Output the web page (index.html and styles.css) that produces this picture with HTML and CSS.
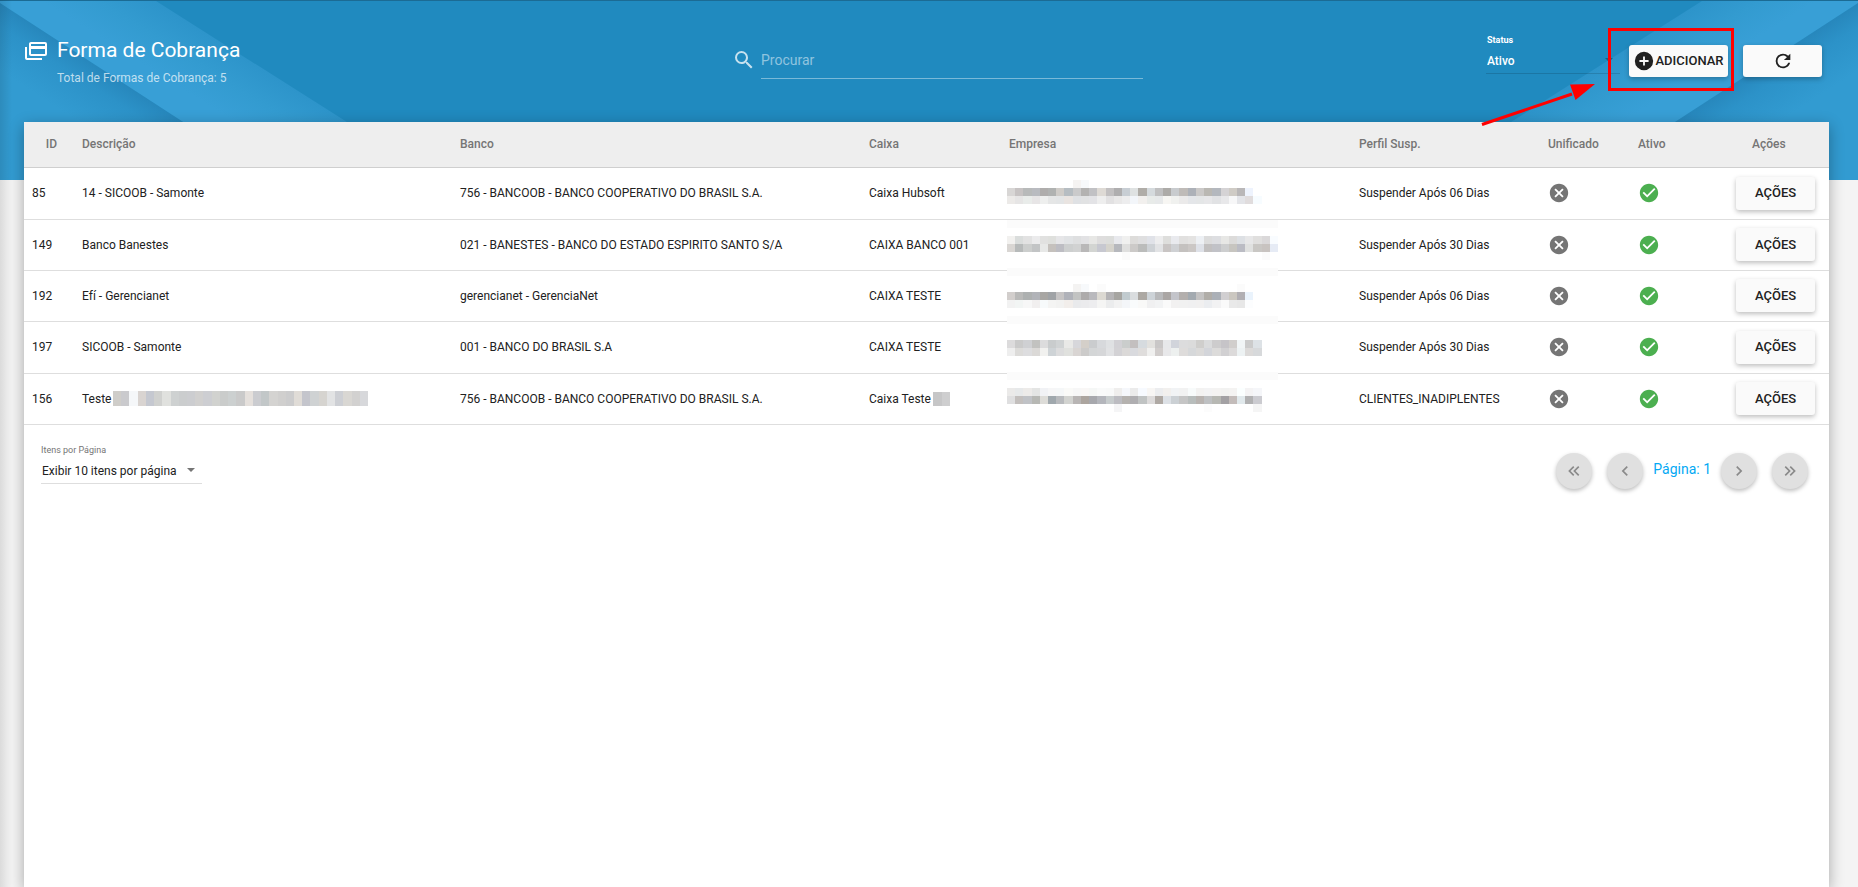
FILE: index.html
```html
<!DOCTYPE html>
<html lang="pt-BR">
<head>
<meta charset="utf-8">
<title>Forma de Cobrança</title>
<link rel="stylesheet" href="styles.css">
</head>
<body>
<svg class="symbols" aria-hidden="true">
  <symbol id="i-close" viewBox="0 0 24 24"><path d="M12,2C17.53,2 22,6.47 22,12C22,17.53 17.53,22 12,22C6.47,22 2,17.53 2,12C2,6.47 6.47,2 12,2M15.59,7L12,10.59L8.41,7L7,8.41L10.59,12L7,15.59L8.41,17L12,13.41L15.59,17L17,15.59L13.41,12L17,8.41L15.59,7Z"/></symbol>
  <symbol id="i-check" viewBox="0 0 24 24"><path d="M12 2C6.5 2 2 6.5 2 12S6.5 22 12 22 22 17.5 22 12 17.5 2 12 2M10 17L5 12L6.41 10.59L10 14.17L17.59 6.58L19 8L10 17Z"/></symbol>
  <symbol id="i-left" viewBox="0 0 24 24"><path d="M15.41,16.58L10.83,12L15.41,7.41L14,6L8,12L14,18L15.41,16.58Z"/></symbol>
  <symbol id="i-right" viewBox="0 0 24 24"><path d="M8.59,16.58L13.17,12L8.59,7.41L10,6L16,12L10,18L8.59,16.58Z"/></symbol>
  <symbol id="i-first" viewBox="0 0 24 24"><path d="M18.41,7.41L17,6L11,12L17,18L18.41,16.59L13.83,12L18.41,7.41M12.41,7.41L11,6L5,12L11,18L12.41,16.59L7.83,12L12.41,7.41Z"/></symbol>
  <symbol id="i-last" viewBox="0 0 24 24"><path d="M5.59,7.41L7,6L13,12L7,18L5.59,16.59L10.17,12L5.59,7.41M11.59,7.41L13,6L19,12L13,18L11.59,16.59L16.17,12L11.59,7.41Z"/></symbol>
  <symbol id="rays" viewBox="0 0 360 180">
    <path fill="url(#corner)" d="M0 2L274 180H0Z"/>
    <path fill="url(#band)" d="M0 0H156L440 180H274L0 2Z"/>
  </symbol>
  <linearGradient id="corner" gradientUnits="userSpaceOnUse" x1="93" y1="62" x2="62" y2="110">
    <stop offset="0" stop-color="#2787bc"/><stop offset=".35" stop-color="#2c92c8"/><stop offset="1" stop-color="#329bd1"/>
  </linearGradient>
  <linearGradient id="band" gradientUnits="userSpaceOnUse" x1="251" y1="60" x2="219" y2="111">
    <stop offset="0" stop-color="#2d94ca"/><stop offset=".5" stop-color="#339bd0"/><stop offset="1" stop-color="#389fd6"/>
  </linearGradient>
</svg>

<div class="page">
  <div class="backdrop" aria-hidden="true">
    <svg class="rays"><use href="#rays"/></svg>
    <svg class="rays rays-right"><use href="#rays"/></svg>
  </div>

  <header class="toolbar">
    <div class="heading">
      <svg class="heading-icon" viewBox="0 0 24 24" aria-hidden="true"><path d="M21,8V6H7V8H21M21,16V11H7V16H21M21,4A2,2 0 0,1 23,6V16A2,2 0 0,1 21,18H7C5.89,18 5,17.1 5,16V6C5,4.89 5.89,4 7,4H21M3,20H18V22H3A2,2 0 0,1 1,20V9H3V20Z"/></svg>
      <div>
        <h1 class="title">Forma de Cobrança</h1>
        <p class="subtitle">Total de Formas de Cobrança: 5</p>
      </div>
    </div>
    <div class="search">
      <svg class="search-icon" viewBox="0 0 24 24" aria-hidden="true"><path d="M9.5,3A6.5,6.5 0 0,1 16,9.5C16,11.11 15.41,12.59 14.44,13.73L14.71,14H15.5L20.5,19L19,20.5L14,15.5V14.71L13.73,14.44C12.59,15.41 11.11,16 9.5,16A6.5,6.5 0 0,1 3,9.5A6.5,6.5 0 0,1 9.5,3M9.5,5C7,5 5,7 5,9.5C5,12 7,14 9.5,14C12,14 14,12 14,9.5C14,7 12,5 9.5,5Z"/></svg>
      <input class="search-input" type="text" placeholder="Procurar" aria-label="Procurar">
    </div>
    <div class="actions">
      <div class="status">
        <label class="status-label" for="status">Status</label>
        <div class="select-wrap">
          <select class="select status-select" id="status"><option>Ativo</option></select>
        </div>
      </div>
      <button class="btn btn-add" type="button">
        <svg class="add-icon" viewBox="0 0 24 24" aria-hidden="true"><path d="M17,13H13V17H11V13H7V11H11V7H13V11H17M12,2A10,10 0 0,0 2,12A10,10 0 0,0 12,22A10,10 0 0,0 22,12A10,10 0 0,0 12,2Z"/></svg>ADICIONAR
      </button>
      <button class="btn btn-refresh" type="button" aria-label="Atualizar">
        <svg class="refresh-icon" viewBox="0 0 24 24" aria-hidden="true"><path d="M17.65,6.35C16.2,4.9 14.21,4 12,4A8,8 0 0,0 4,12A8,8 0 0,0 12,20C15.73,20 18.84,17.45 19.73,14H17.65C16.83,16.33 14.61,18 12,18A6,6 0 0,1 6,12A6,6 0 0,1 12,6C13.66,6 15.14,6.69 16.22,7.78L13,11H20V4L17.65,6.35Z"/></svg>
      </button>
      <svg class="callout" viewBox="0 0 255 102" aria-hidden="true">
        <rect x="129.500" y="3.500" width="123" height="60" fill="none" stroke="#f00" stroke-width="3"/>
        <path d="M2 98.500L92 68" stroke="#f00" stroke-width="3"/>
        <path d="M115 58L90 58.500L95.500 74Z" fill="#f00"/>
      </svg>
    </div>
  </header>

  <main class="card">
    <table class="grid">
      <colgroup>
        <col class="c-id"><col class="c-desc"><col class="c-bank"><col class="c-cash"><col class="c-company"><col class="c-profile"><col class="c-unified"><col class="c-active"><col class="c-actions">
      </colgroup>
      <thead>
        <tr><th class="th-id">ID</th><th>Descrição</th><th>Banco</th><th>Caixa</th><th>Empresa</th><th>Perfil Susp.</th><th>Unificado</th><th>Ativo</th><th class="th-actions">Ações</th></tr>
      </thead>
      <tbody>
        <tr><td>85</td><td>14 - SICOOB - Samonte</td><td>756 - BANCOOB - BANCO COOPERATIVO DO BRASIL S.A.</td><td>Caixa Hubsoft</td><td class="company"><svg class="mosaic" id="mosaic" viewBox="0 0 33 29" preserveAspectRatio="none" shape-rendering="crispEdges" aria-hidden="true"></svg></td><td>Suspender Após 06 Dias</td><td><svg class="mark no"><use href="#i-close"/></svg></td><td><svg class="mark yes"><use href="#i-check"/></svg></td><td><button class="btn btn-row" type="button">AÇÕES</button></td></tr>
        <tr><td>149</td><td>Banco Banestes</td><td>021 - BANESTES - BANCO DO ESTADO ESPIRITO SANTO S/A</td><td>CAIXA BANCO 001</td><td></td><td>Suspender Após 30 Dias</td><td><svg class="mark no"><use href="#i-close"/></svg></td><td><svg class="mark yes"><use href="#i-check"/></svg></td><td><button class="btn btn-row" type="button">AÇÕES</button></td></tr>
        <tr><td>192</td><td>Efí - Gerencianet</td><td>gerencianet - GerenciaNet</td><td>CAIXA TESTE</td><td></td><td>Suspender Após 06 Dias</td><td><svg class="mark no"><use href="#i-close"/></svg></td><td><svg class="mark yes"><use href="#i-check"/></svg></td><td><button class="btn btn-row" type="button">AÇÕES</button></td></tr>
        <tr><td>197</td><td>SICOOB - Samonte</td><td>001 - BANCO DO BRASIL S.A</td><td>CAIXA TESTE</td><td></td><td>Suspender Após 30 Dias</td><td><svg class="mark no"><use href="#i-close"/></svg></td><td><svg class="mark yes"><use href="#i-check"/></svg></td><td><button class="btn btn-row" type="button">AÇÕES</button></td></tr>
        <tr><td>156</td><td><div class="masked">Teste <svg class="mask-name" id="mask-name" viewBox="0 0 31 1" preserveAspectRatio="none" shape-rendering="crispEdges" aria-hidden="true"></svg></div></td><td>756 - BANCOOB - BANCO COOPERATIVO DO BRASIL S.A.</td><td><div class="masked">Caixa Teste <svg class="mask-cash" id="mask-cash" viewBox="0 0 2 1" preserveAspectRatio="none" shape-rendering="crispEdges" aria-hidden="true"></svg></div></td><td></td><td>CLIENTES_INADIPLENTES</td><td><svg class="mark no"><use href="#i-close"/></svg></td><td><svg class="mark yes"><use href="#i-check"/></svg></td><td><button class="btn btn-row" type="button">AÇÕES</button></td></tr>
      </tbody>
    </table>

    <div class="footer">
      <div class="per-page">
        <label class="per-page-label" for="per-page">Itens por Página</label>
        <div class="select-wrap">
          <select class="select per-page-select" id="per-page"><option>Exibir 10 itens por página</option></select>
        </div>
      </div>
      <nav class="pager" aria-label="Paginação">
        <button class="round" type="button" aria-label="Primeira"><svg class="chevron"><use href="#i-first"/></svg></button>
        <button class="round" type="button" aria-label="Anterior"><svg class="chevron"><use href="#i-left"/></svg></button>
        <span class="current">Página: 1</span>
        <button class="round" type="button" aria-label="Próxima"><svg class="chevron"><use href="#i-right"/></svg></button>
        <button class="round" type="button" aria-label="Última"><svg class="chevron"><use href="#i-last"/></svg></button>
      </nav>
    </div>
  </main>
</div>
<script src="app.js"></script>
</body>
</html>
```

FILE: styles.css
```css
* { box-sizing: border-box; }

body {
  margin: 0;
  font-family: Roboto, "Liberation Sans", sans-serif;
  font-size: 12px;
  line-height: 16px;
  color: #212121;
  background: #f4f4f4;
}

.symbols { position: absolute; width: 0; height: 0; }

.page {
  position: relative;
  display: flex;
  flex-direction: column;
  min-height: 100vh;
  padding: 0 29px 0 24px;
  overflow: hidden;
  background: linear-gradient(90deg, rgba(0, 0, 0, .1), rgba(0, 0, 0, 0) 12px);
}

.backdrop {
  position: absolute;
  inset: 0 0 auto 0;
  z-index: -1;
  height: 180px;
  overflow: hidden;
  background: #208abf;
  border-top: 1px solid #1b6b94;
}

.rays {
  position: absolute;
  top: 0;
  left: 0;
  width: 360px;
  height: 180px;
}

.rays-right { right: 0; left: auto; transform: scaleX(-1); }

/* Toolbar */
.toolbar {
  display: grid;
  grid-template-columns: minmax(0, 708fr) minmax(0, 411fr) minmax(0, 686fr);
  height: 122px;
}

.heading { display: flex; gap: 9px; padding-top: 38px; color: #fff; }
.heading-icon { width: 24px; height: 24px; fill: #fff; }
.title { margin: 0; font-size: 21px; line-height: 24px; font-weight: 400; }
.subtitle { margin: 8px 0 0; color: rgba(255, 255, 255, .7); }

.search { display: flex; gap: 5px; padding-top: 48px; }
.search-icon { width: 24px; height: 24px; fill: rgba(255, 255, 255, .75); }
.search-input {
  flex: 1;
  min-width: 0;
  height: 31px;
  padding: 0 0 7px;
  border: 0;
  border-bottom: 1px solid rgba(255, 255, 255, .4);
  border-radius: 0;
  outline: 0;
  background: none;
  color: #fff;
  font: 14px/20px Roboto, sans-serif;
}
.search-input::placeholder { color: rgba(255, 255, 255, .5); opacity: 1; }

.actions {
  position: relative;
  display: flex;
  justify-content: flex-end;
  padding: 0 7px 0 0;
}
.status { width: 134px; margin-right: 9px; padding-top: 34px; }
.status-label { display: block; padding-left: 1px; color: #fff; font-size: 9px; line-height: 12px; font-weight: 700; }

.select-wrap { position: relative; }
.select-wrap::after {
  content: "";
  position: absolute;
  top: 12px;
  right: 7px;
  border: 4px solid transparent;
  border-top-color: currentColor;
  border-bottom: 0;
  pointer-events: none;
}
.select {
  appearance: none;
  display: block;
  width: 100%;
  height: 28px;
  padding: 3px 0 0 1px;
  border: 0;
  border-bottom: 1px solid #dedede;
  border-radius: 0;
  outline: 0;
  background: none;
  color: #212121;
  font: 12px/16px Roboto, sans-serif;
}
.status-select { border-color: rgba(0, 0, 0, .14); color: #fff; font-size: 12px; font-weight: 500; }
.status .select-wrap { color: #1b5e82; }
.per-page .select-wrap { color: #757575; }

.btn {
  display: flex;
  align-items: center;
  justify-content: center;
  padding: 0;
  border: 0;
  border-radius: 3px;
  background: #fafafa;
  box-shadow: 0 2px 5px rgba(0, 0, 0, .26);
  color: #212121;
  font: 500 13px/16px Roboto, sans-serif;
}
.btn-add { width: 99px; height: 32px; margin: 45px 15px 0 0; }
.btn-refresh { width: 79px; height: 32px; margin-top: 45px; }
.btn-row { width: 79px; height: 33px; }
.add-icon { width: 22px; height: 22px; fill: #212121; }
.refresh-icon { width: 22px; height: 22px; fill: #212121; }

.callout {
  position: absolute;
  top: 26px;
  right: 94px;
  z-index: 2;
  width: 255px;
  height: 102px;
  pointer-events: none;
}

/* Card and table */
.card {
  flex: 1;
  background: #fff;
  box-shadow: 0 4px 14px rgba(0, 0, 0, .32);
}

.grid { width: 100%; border-collapse: collapse; table-layout: fixed; }
.c-id { width: 50px; }
.c-desc { width: 378px; }
.c-bank { width: 409px; }
.c-cash { width: 140px; }
.c-company { width: 350px; }
.c-profile { width: 189px; }
.c-unified { width: 90px; }
.c-active { width: 98px; }
.c-actions { width: 101px; }

.grid th {
  height: 45px;
  padding: 0 8px;
  border-bottom: 1px solid #cfcfcf;
  background: #eee;
  color: #757575;
  font-weight: 500;
  text-align: left;
}
.grid .th-id { padding-right: 17px; text-align: right; }
.grid .th-actions { padding-left: 24px; }
.grid td { height: 51px; padding: 0 8px; border-bottom: 1px solid #dedede; }
.grid tr:nth-child(3n+1) td { height: 52px; }

.mark { display: block; width: 22px; height: 22px; }
.no { fill: #757575; }
.yes { fill: #4caf50; }

.company { position: relative; }
.mosaic { position: absolute; top: 12px; left: 6px; width: 271px; height: 232px; }
.masked { display: flex; align-items: center; gap: 2px; white-space: nowrap; }
.mask-name { width: 255px; height: 15px; }
.mask-cash { width: 17px; height: 14px; }

/* Footer */
.footer { display: flex; justify-content: space-between; padding: 19px 21px 0 17px; }
.per-page { width: 161px; }
.per-page-label { display: block; color: #757575; font-size: 9px; line-height: 12px; }
.pager { display: flex; align-items: center; gap: 15px; padding-top: 9px; height: 46px; }
.current { margin: 0 -5px; padding-bottom: 4px; color: #03a9f4; font-size: 14px; white-space: nowrap; }
.round {
  display: flex;
  align-items: center;
  justify-content: center;
  width: 36px;
  height: 36px;
  padding: 0;
  border: 0;
  border-radius: 50%;
  background: #e0e0e0;
  box-shadow: 0 2px 4px rgba(0, 0, 0, .26);
}
.chevron { width: 20px; height: 20px; fill: #8a8a8a; }
```

FILE: app.js
```js
// Censored cells: each entry is [row, first column, colours].
const company = [
  [0, 8, "f5f3f2 f7f9fb"],
  [1, 0, "d8d6d5 c7c3c3 b8baba b9bbc0 afadac b0b2b1 cfccc8 b6bdc2 cacacb b3b2b1 c1c1c4 dedad5 c2c0c1 afaeaf c8ced4 dfe2e2 b0ada8 d5dadd c0c0c1 adaba8 c8cbce bfbbb8 adb1b8 cbc9c8 bab8b3 b4b8be d5d3d5 cfcbc5 b9b7b8 eef3fd"],
  [2, 0, "eceae8 e6e5e5 e9ecea e7e5e6 eeefee e5e6e6 e3e5e6 e9e4e1 dfe1e4 e1e2e3 e3e3e6 eeeeee e2e1e2 e9e8e8 ededee f3f6fa f2f0ee e8ebe9 e7e9ea f7f6f3 f0f1ef ebeaea e4e6e9 e4e6e7 e7e7e9 e1e2e4 e8e8ea f7f7f8 e3e4e8 e0dcdd f7fcff"],
  [5, 0, "fbfbfb", 33],
  [7, 0, "f2f1ef dadddc e2e2e2 ebebec e1e1e0 dfe0dd e6e6e8 e1e3e5 dedfe0 e2e2e4 e7e7e5 dedddd dcdddb e8e9ed f0f0ef dddcda dfdfe0 e0e2e8 ededee dededc e9eaee e1e0df e4e3e2 edf0f4 dcdcdc dddee1 e7e7e5 dcdbda dde0e4 e7e7e8 e0dfde dad8d9 f9fcff"],
  [8, 0, "d9d6d3 b7baba cccecd c2c4c5 e7e8e7 c5c1bd bdbdc3 cdcfcf d1d2d2 b9b8b8 d3d5d2 c7c8d0 d5d3cc b6b8bd dfdfde cccac8 bbbcbb ced2d6 e2e3e5 c9c5c4 cfd1d4 c4c1bf cbc7c5 dee1e8 c2c0c0 c1c2c7 cdcecf c7c5c0 bbbcc4 e0e1e0 c9c7c4 c8c3c0 e6ebf5"],
  [9, 14, "fbfbfb"], [9, 31, "fbfbfb"],
  [11, 0, "fbfbfb", 33],
  [13, 8, "f4f3f2 f7f9fb"], [13, 11, "fbfbfb"], [13, 28, "fbfbfb"],
  [14, 0, "d2cecc b9b9b8 adb0b0 b1b3b8 a8a6a3 a0a3a6 c6c4c4 b0b2b9 c2c3c2 adabab b9b9bd dcd9d2 b5b4b6 a6a5a1 c1cbcf dadddf aca8a3 cdd3d8 b8b9bb aaa6a4 c3c4ca b3afad a3aab0 c3c2c2 b0ada8 abb0b7 d1cfd1 cbc7c0 b1afb3 eaf3fc"],
  [15, 0, "f2f2f2 f2f5f4 f7f7f7 f1efef f7fafb f4f4f3 f2f2f1 f2eeeb e9eaec ebebed ededef f5f5f4 ebeced f2f2f2 f4f6f9 f9fbfc f9f9f8 f0f0f1 f2f3f4 fafafa f2f1f1 f1f1f1 f0f0f1 f1f0f0 ebedf0 f2f2f3 fafafa e9e9e9 e7e7e7 fcfdfe"],
  [17, 0, "fbfbfb", 33],
  [20, 0, "dcdbdc cacaca cfd0d3 c2c2c0 dcdcdd c9cccd d0d3d4 e9e9e7 d7d7db d4cfc9 caccce d7d9dc dfe1e3 d2d1d5 cacdcc c3bfbf d6dbdf e2e1de c9c7c7 e7e8ea d1d4db dcdcdd dbdbdb cfcecc dadbdc cdcccd c6c4c8 d1cecc f1f5f6 cbcbcb dde2e6"],
  [21, 0, "eeeeee dcdbd9 dddddf dbd9d7 f1f1ef ced3d6 dcdcdd e0e1de d9d5d3 cccbca d4d6d7 d6d7d9 e1e2e4 d3d2d5 dbd9d8 d9dade dfdddc f0f0ef d1cdcc e8e8ea edf0ef dedcdb d6d8da dbdad9 d3d5da dcdbda d1d0d2 dcdada edf2f3 dcdad9 d7d9db"],
  [24, 0, "fbfbfb", 33],
  [26, 0, "ebeae9 e7e9ea edebe9 e4e5e4 f1f2f5 f6f6f7 f5f7f8 fafaf8 f7f7f7 f9f7f6 f5f7f6 f9fafa f8f9f9 efeeed f5f7fb ebebeb f7faff f8f6f4 ecedef f2f0ee f1f3f5 f2f2f2 f8fbfb f3f2f1 f3f3f4 f4f3f2 f2f2f1 f4f3f2 fbffff f4f3f4 f5f6f9"],
  [27, 0, "dfdfe0 c3bfbd c0c2c6 b7b8b4 dddcd8 a0a8ad b8babd d2d3d0 b8b5b4 aca59f a7a8ad b4b6bc c7cccd bcbcc1 b5b2af afaeb1 c0c3c3 dddbdb afa9a4 dde1e6 cbd0d4 c5c5c5 b8bdbc b8b3b0 bec0c2 b7b8b3 a3a1a4 c3bcba e1e9ec b1b1b2 cbcbd0"],
  [28, 13, "f5f5f6"], [28, 24, "fcfcfc"], [28, 30, "f5f5f5"]
];
const personName = [[0, 0, "cfcdc9 cacacd f5f7f9 d9d4d1 c5c8d0 d0d1cf e0e1de ced1d1 cbcdce cccdd0 d1d0cf cdced2 d1d2cf cacccb ccd0d0 cacaca e5e0dc cbccd0 c2c7c8 d4d3d1 d0cfce cccccd e0dcd7 c4c5cc cfd2d3 d6d4d0 e2e3e4 cdcfd4 d9d7d3 d2d1d0 d7d8db"]];
const cashName = [[0, 0, "c6c6c7 cececf"]];

function paint(id, bands) {
  const svg = document.getElementById(id);
  for (const [row, start, colours, span = 1] of bands) {
    colours.split(" ").forEach((colour, i) => {
      const cell = document.createElementNS("http://www.w3.org/2000/svg", "rect");
      cell.setAttribute("x", start + i);
      cell.setAttribute("y", row);
      cell.setAttribute("width", span);
      cell.setAttribute("height", 1);
      cell.setAttribute("fill", "#" + colour);
      svg.append(cell);
    });
  }
}

paint("mosaic", company);
paint("mask-name", personName);
paint("mask-cash", cashName);
```
